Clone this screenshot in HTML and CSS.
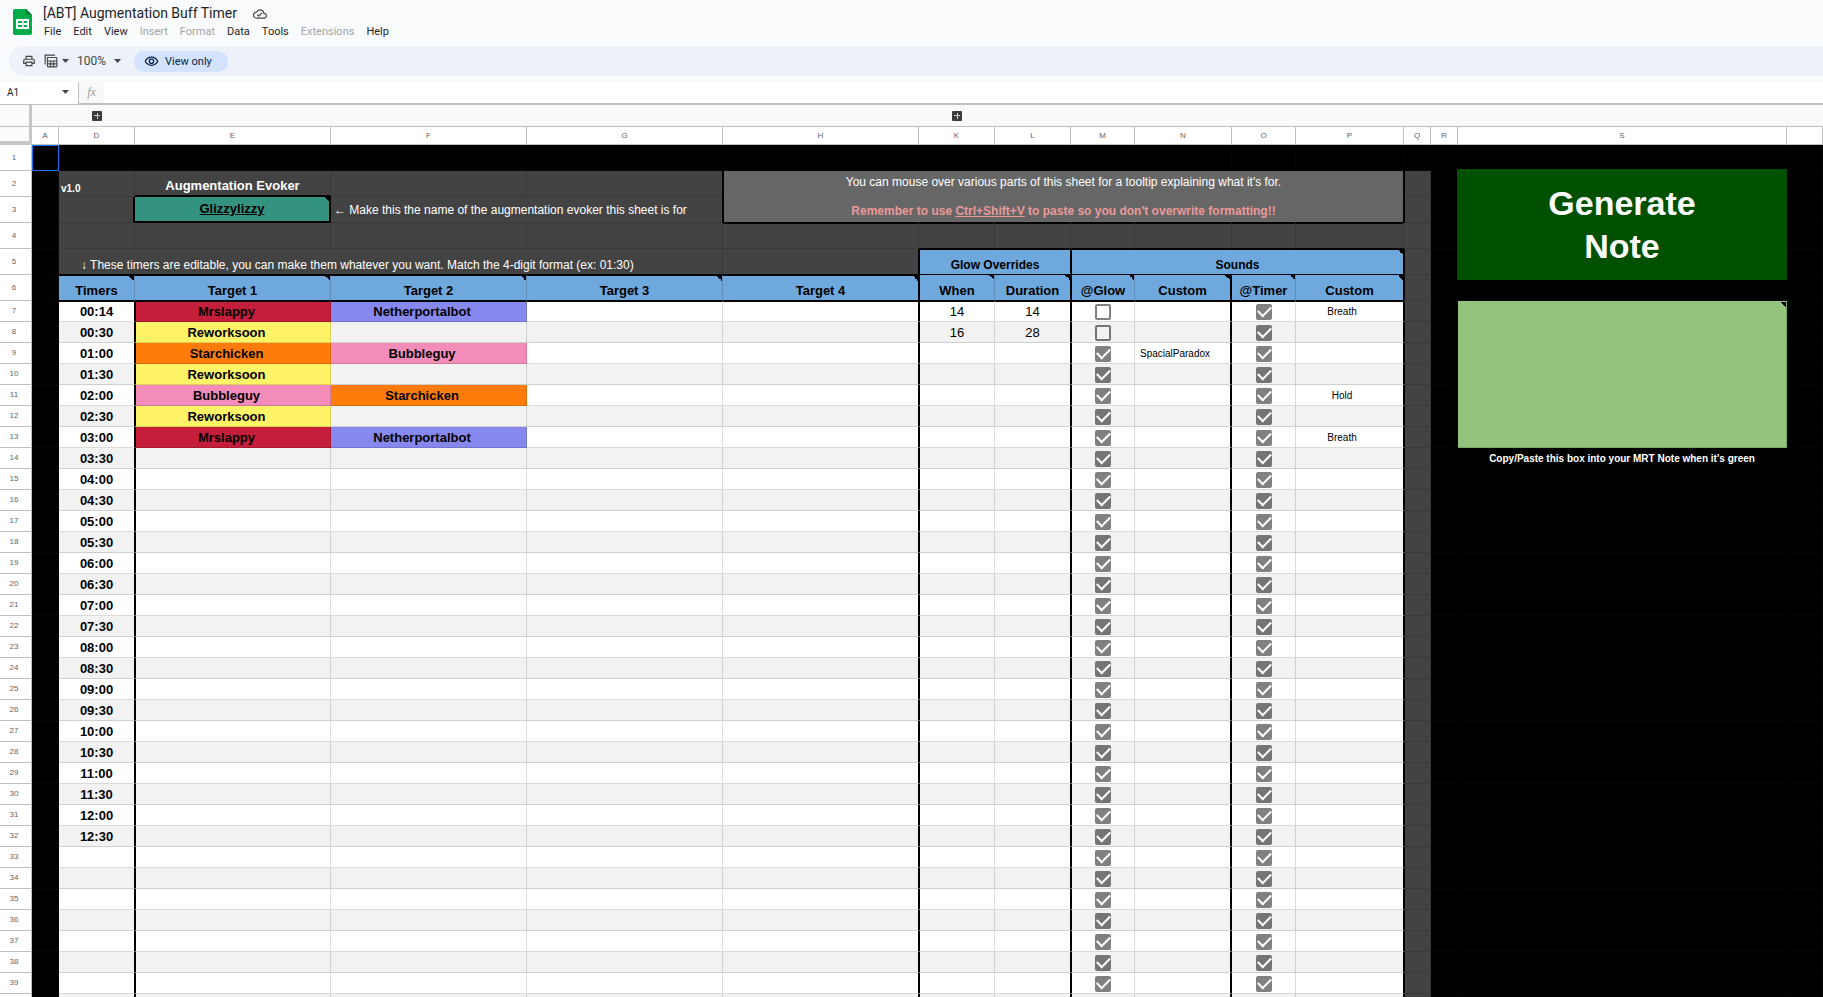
FILE: index.html
```html
<!DOCTYPE html>
<html lang="en">
<head>
<meta charset="utf-8">
<title>[ABT] Augmentation Buff Timer</title>
<link rel="stylesheet" href="styles.css">
</head>
<body>
<header class="topbar">
  <svg class="logo" viewBox="0 0 19 26" aria-hidden="true">
    <path d="M2 0h11l6 6v18a2 2 0 0 1-2 2H2a2 2 0 0 1-2-2V2a2 2 0 0 1 2-2z" fill="#00ac47"/>
    <path d="M13 0l6 6h-4a2 2 0 0 1-2-2z" fill="#00832d"/>
    <path d="M3 10h13v10H3zM5 12v2h4v-2zM10.500 12v2H14v-2zM5 16v2h4v-2zM10.500 16v2H14v-2z" fill="#fff" fill-rule="evenodd"/>
  </svg>
  <div class="heading">
    <div class="title-row">
      <h1 class="title">[ABT] Augmentation Buff Timer</h1>
      <svg class="cloud" viewBox="0 0 24 24" aria-hidden="true"><path fill="#444746" d="M19.350 10.040A7.490 7.490 0 0 0 12 4C9.110 4 6.600 5.640 5.350 8.040A5.994 5.994 0 0 0 0 14c0 3.310 2.690 6 6 6h13c2.760 0 5-2.240 5-5 0-2.640-2.050-4.780-4.650-4.960zM19 18H6c-2.210 0-4-1.790-4-4 0-2.050 1.530-3.760 3.560-3.970l1.070-.11.5-.95A5.469 5.469 0 0 1 12 6c2.620 0 4.880 1.860 5.390 4.430l.3 1.500 1.530.11A2.980 2.980 0 0 1 22 15c0 1.650-1.350 3-3 3zm-9-3.820-2.090-2.090L6.500 13.500 10 17l6.010-6.010-1.410-1.410z"/></svg>
    </div>
    <nav class="menu">
      <button>File</button><button>Edit</button><button>View</button><button disabled>Insert</button><button disabled>Format</button><button>Data</button><button>Tools</button><button disabled>Extensions</button><button>Help</button>
    </nav>
  </div>
</header>

<div class="toolbar" role="toolbar" aria-label="Main">
  <button class="tool" aria-label="Print"><svg viewBox="0 0 24 24"><path fill="#444746" d="M19 8h-1V3H6v5H5c-1.660 0-3 1.340-3 3v6h4v4h12v-4h4v-6c0-1.660-1.340-3-3-3zM8 5h8v3H8V5zm8 14H8v-4h8v4zm2-4v-2H6v2H4v-4c0-.55.45-1 1-1h14c.55 0 1 .45 1 1v4h-2z"/></svg></button>
  <button class="tool drop" aria-label="Filter views"><svg viewBox="0 0 24 24"><path fill="#444746" d="M1 1h18v2H3v15H1zM5 5h16a2 2 0 0 1 2 2v14a2 2 0 0 1-2 2H7a2 2 0 0 1-2-2zM7 7v4h14V7zm0 6v3h3.500v-3zm5.500 0v3h3v-3zm5 0v3H21v-3zM7 18v3h3.500v-3zm5.500 0v3h3v-3zm5 0v3H21v-3z" fill-rule="evenodd"/></svg><i class="caret"></i></button>
  <button class="tool zoom">100%<i class="caret"></i></button>
  <button class="view-only"><svg viewBox="0 0 24 24"><path fill="#041e49" d="M12 4C7 4 2.730 7.110 1 11.500 2.730 15.890 7 19 12 19s9.270-3.110 11-7.500C21.270 7.110 17 4 12 4zm0 13c-3.790 0-7.170-2.130-8.820-5.500C4.830 8.130 8.210 6 12 6s7.170 2.130 8.820 5.500C19.170 14.870 15.790 17 12 17zm0-10a4.500 4.500 0 1 0 0 9 4.500 4.500 0 0 0 0-9zm0 7a2.500 2.500 0 1 1 0-5 2.500 2.500 0 0 1 0 5z"/></svg>View only</button>
</div>

<div class="formula-bar">
  <div class="name-box"><input class="name-input" aria-label="Name box" value="A1"><i class="caret"></i></div>
  <label class="fx" for="formula">fx</label>
  <input class="formula" id="formula">
</div>

<main class="sheet">
<table class="grid">
  <colgroup>
    <col class="w-rows"><col class="w-s"><col class="w-m"><col class="w-l"><col class="w-l"><col class="w-l"><col class="w-l"><col class="w-m"><col class="w-m"><col class="w-check"><col class="w-glow"><col class="w-check"><col class="w-custom"><col class="w-s"><col class="w-s"><col class="w-note"><col>
  </colgroup>
  <thead>
    <tr class="groups">
      <th class="corner"></th><td></td><td><button class="expand" aria-label="Expand columns B to C"></button></td><td colspan="4"></td><td><button class="expand" aria-label="Expand columns I to J"></button></td><td colspan="9"></td>
    </tr>
    <tr class="letters">
      <th class="corner end"></th><th>A</th><th>D</th><th>E</th><th>F</th><th>G</th><th>H</th><th>K</th><th>L</th><th>M</th><th>N</th><th>O</th><th>P</th><th>Q</th><th>R</th><th>S</th><th></th>
    </tr>
  </thead>
  <tbody class="intro">
    <tr>
      <th>1</th><td class="blk selected"></td><td class="blk"></td><td class="blk"></td><td class="blk"></td><td class="blk"></td><td class="blk"></td><td class="blk"></td><td class="blk"></td><td class="blk"></td><td class="blk"></td><td class="blk"></td><td class="blk"></td><td class="blk"></td><td class="blk"></td><td class="blk"></td><td class="blk"></td>
    </tr>
    <tr>
      <th>2</th><td class="blk"></td><td class="drk low version">v1.0</td><td class="drk low strong line-bottom">Augmentation Evoker</td><td class="drk"></td><td class="drk line-end"></td>
      <td class="info" colspan="7" rowspan="2"><p>You can mouse over various parts of this sheet for a tooltip explaining what it's for.</p><p class="warn">Remember to use <u>Ctrl+Shift+V</u> to paste so you don't overwrite formatting!!</p></td>
      <td class="drk edge"></td><td class="blk"></td><td class="blk anchor"><button class="generate">Generate<br>Note</button></td><td class="blk"></td>
    </tr>
    <tr>
      <th>3</th><td class="blk"></td><td class="drk line-right"></td><td class="evoker note">Glizzylizzy</td><td class="drk hint line-end" colspan="2">← Make this the name of the augmentation evoker this sheet is for</td>
      <td class="drk edge"></td><td class="blk"></td><td class="blk"></td><td class="blk"></td>
    </tr>
    <tr>
      <th>4</th><td class="blk"></td><td class="drk"></td><td class="drk"></td><td class="drk"></td><td class="drk"></td><td class="drk under-box"></td><td class="drk under-box over-head"></td><td class="drk under-box over-head"></td><td class="drk under-box over-head"></td><td class="drk under-box over-head"></td><td class="drk under-box over-head"></td><td class="drk under-box over-head"></td><td class="drk"></td><td class="blk"></td><td class="blk"></td><td class="blk"></td>
    </tr>
    <tr>
      <th>5</th><td class="blk"></td><td class="drk low hint timers-hint over-head" colspan="4">↓ These timers are editable, you can make them whatever you want. Match the 4-digit format (ex: 01:30)</td><td class="drk over-head line-end"></td>
      <td class="band low line-end" colspan="2">Glow Overrides</td><td class="band low note line-end" colspan="4">Sounds</td><td class="drk"></td><td class="blk"></td><td class="blk"></td><td class="blk"></td>
    </tr>
    <tr class="heads">
      <th>6</th><td class="blk"></td><td class="head ruled note">Timers</td><td class="head ruled note">Target 1</td><td class="head ruled note">Target 2</td><td class="head ruled note">Target 3</td><td class="head ruled note line-end">Target 4</td><td class="head note">When</td><td class="head note line-end">Duration</td><td class="head note">@Glow</td><td class="head note line-right">Custom</td><td class="head note">@Timer</td><td class="head note line-end">Custom</td><td class="drk"></td><td class="blk"></td><td class="blk"></td><td class="blk"></td>
    </tr>
  </tbody>
  <tbody class="data" id="rows"></tbody>
</table>
</main>
<script src="rows.js"></script>
</body>
</html>
```

FILE: styles.css
```css
* { box-sizing: border-box; }
body {
  margin: 0;
  height: 100vh;
  overflow: hidden;
  display: flex;
  flex-direction: column;
  background: #f9fbfd;
  font-family: Roboto, "Liberation Sans", sans-serif;
  color: #1f1f1f;
}
button, input { font: inherit; color: inherit; border: 0; padding: 0; background: none; }
p, h1 { margin: 0; }

/* Title and menus */
.topbar { display: flex; gap: 11px; padding: 4px 13px 0; height: 46px; flex: none; }
.logo { width: 19px; height: 26px; margin-top: 5px; }
.title-row { display: flex; align-items: center; gap: 16px; height: 18px; }
.title { font-size: 14px; line-height: 18px; font-weight: 400; }
.cloud { width: 14px; height: 14px; margin-top: 2px; }
.menu { display: flex; gap: 12px; padding: 2px 0 0 1px; font-size: 11px; line-height: 15px; }
.menu button:disabled { color: #a3a5a8; }

/* Toolbar */
.toolbar {
  display: flex;
  align-items: center;
  flex: none;
  height: 30px;
  margin: 0 0 6px 9px;
  padding-left: 13px;
  border-radius: 15px 0 0 15px;
  background: #edf2fa;
  font-size: 12px;
  color: #444746;
}
.tool { display: flex; align-items: center; gap: 4px; margin-right: 8px; }
.tool svg { width: 14px; height: 14px; }
.zoom { gap: 8px; margin-right: 13px; }
.caret { width: 7px; height: 4px; background: #444746; clip-path: polygon(0 0, 100% 0, 50% 100%); }
.view-only {
  display: flex;
  align-items: center;
  gap: 6px;
  height: 21px;
  padding: 0 16px 0 10px;
  border-radius: 11px;
  background: #d3e3fd;
  color: #041e49;
  font-size: 11px;
}
.view-only svg { width: 15px; height: 15px; }

/* Formula bar */
.formula-bar { display: flex; flex: none; height: 23px; border-bottom: 1px solid #c0c0c0; background: #fff; }
.name-box { display: flex; align-items: center; width: 78px; padding: 0 9px 2px 7px; font-size: 10px; }
.name-input { flex: 1; min-width: 0; }
.fx {
  width: 26px;
  border-bottom: 1px solid #c0c0c0;
  border-left: 1px solid #c0c0c0;
  background: #f8f8f8;
  color: #a0a0a0;
  font: italic 12px/20px "Liberation Serif", serif;
  text-align: center;
}
.formula { flex: 1; min-width: 0; border-bottom: 1px solid #c0c0c0; font-size: 12px; }

/* Sheet */
.sheet { flex: 1; min-height: 0; overflow: hidden; background: #000; }
.grid {
  width: 100%;
  table-layout: fixed;
  border-spacing: 0;
  font: 13px/16px "Liberation Sans", Arial, sans-serif;
  color: #000;
  text-align: center;
}
.w-rows { width: 32px; }
.w-s { width: 27px; }
.w-m { width: 76px; }
.w-l { width: 196px; }
.w-check { width: 64px; }
.w-glow { width: 97px; }
.w-custom { width: 108px; }
.w-note { width: 329px; }

.grid th, .grid td { padding: 0; white-space: nowrap; vertical-align: middle; }
.grid th {
  border: solid #c0c0c0;
  border-width: 0 1px 1px 0;
  background: #fff;
  color: #5f6368;
  font-size: 8px;
  line-height: 10px;
  font-weight: 400;
}
.grid tbody th { padding-right: 3px; }
.groups td { height: 22px; background: #f9f9f9; border-bottom: 1px solid #c0c0c0; }
.letters th { height: 18px; }
.grid .corner { border-right: 3px solid #c6c6c6; background: #f9fbfd; }
.grid .end { border-bottom: 4px solid #c6c6c6; }
.expand {
  display: block;
  width: 10px;
  height: 10px;
  margin: 0 auto;
  border-radius: 1px;
  background:
    linear-gradient(#ccc, #ccc) center / 6px 1px no-repeat,
    linear-gradient(#ccc, #ccc) center / 1px 6px no-repeat,
    #3c3c3c;
}

.intro td, .data td { border: solid rgba(0, 0, 0, .14); border-width: 0 1px 1px 0; }
.intro td { height: 26px; }
.data td { height: 21px; }
.grid .blk { background: #000; border-color: #060606; }
.drk { background: #434343; color: #fff; }
.grid .selected { outline: 1px solid #1a73e8; outline-offset: -1px; }
.grid .low { vertical-align: bottom; padding-bottom: 1px; }
.strong { font-weight: 700; }
.version { font-size: 10px; line-height: 12px; font-weight: 700; text-align: left; }
.grid .version { padding-left: 2px; }
.hint { font-size: 12px; text-align: left; }
.grid .hint { padding-left: 3px; }
.grid .timers-hint { padding-left: 22px; }
.note {
  background-image: linear-gradient(to bottom left, #000 50%, transparent 50%);
  background-position: top right;
  background-repeat: no-repeat;
  background-size: 5px 5px;
}
.evoker { background-color: #33937f; font-weight: 700; text-decoration: underline; }
.intro .evoker { border-color: #000; border-width: 0 2px 2px 0; }
.intro .line-bottom { border-bottom: 2px solid #000; }
.intro .line-right, .data .line-right { border-right: 2px solid #000; }
.grid .line-end { border-right: 1px solid #000; }
.grid .line-end + td { border-left: 1px solid #000; }
.intro .over-head { border-bottom: 1px solid #000; }
.intro .edge { border-left: 1px solid #000; }
.intro .info {
  background: #666;
  border: solid #000;
  border-width: 0 1px 1px 1px;
  color: #fff;
  font-size: 12px;
  line-height: 22px;
  vertical-align: top;
}
.warn { margin-top: 7px; color: #ea9999; font-weight: 700; }
.under-box { box-shadow: inset 0 1px #000; }
.band { background-color: #6fa8dc; font-size: 12px; font-weight: 700; }
.intro .band { border-top: 1px solid #000; border-right-color: #000; border-bottom-color: #000; }
.head { background-color: #6fa8dc; font-weight: 700; }
.grid .head { border-bottom: 1px solid #000; vertical-align: bottom; padding-bottom: 1px; }
.heads .ruled { border-top: 1px solid #000; }

.anchor { position: relative; }
.generate {
  position: absolute;
  z-index: 1;
  top: -2px;
  left: -1px;
  right: -1px;
  height: 111px;
  background: #005000;
  color: #fff;
  font-size: 34px;
  line-height: 43px;
  font-weight: 700;
}

/* Timer rows */
.data td { background-color: #fff; }
.grid .data td { padding-top: 1px; }
.data .alt td { background-color: #f2f2f2; }
.data .first td { border-top: 1px solid #000; }
.data tr .blk { background-color: #000; border-top-color: #000; }
.data tr .drk { background-color: #434343; border-top-color: #434343; }
.time { font-weight: 700; }
.name { font-weight: 700; }
.data .name { padding-right: 13px; }
.small { font-size: 10px; }
.data .small { padding-right: 15px; }
.data tr .red { background-color: #c41e3a; }
.data tr .purple { background-color: #8788ee; }
.data tr .yellow { background-color: #fff468; }
.data tr .orange { background-color: #ff7c0a; }
.data tr .pink { background-color: #f48cba; }
.data tr .output { background-color: #93c47d; border-top-color: #93c47d; }
.caption { color: #fff; font-size: 10px; font-weight: 700; }

.check {
  appearance: none;
  display: grid;
  place-items: center;
  width: 16px;
  height: 16px;
  margin: 0 auto;
  border: 2px solid #808080;
  border-radius: 2px;
}
.alt .check { border-color: #757575; }
.check:checked { background: #808080; }
.alt .check:checked { background: #757575; }
.check:checked::before {
  content: "";
  width: 11px;
  height: 6px;
  border: solid #fff;
  border-width: 0 0 2px 2px;
  transform: translateY(-2px) rotate(-45deg);
}
```

FILE: rows.js
```js
const names = {
  Mrslappy: "red",
  Netherportalbot: "purple",
  Reworksoon: "yellow",
  Starchicken: "orange",
  Bubbleguy: "pink"
};

const plan = {
  7: { targets: ["Mrslappy", "Netherportalbot"], when: 14, duration: 14, glow: false, timerSound: "Breath" },
  8: { targets: ["Reworksoon"], when: 16, duration: 28, glow: false },
  9: { targets: ["Starchicken", "Bubbleguy"], glowSound: "SpacialParadox" },
  10: { targets: ["Reworksoon"] },
  11: { targets: ["Bubbleguy", "Starchicken"], timerSound: "Hold" },
  12: { targets: ["Reworksoon"] },
  13: { targets: ["Mrslappy", "Netherportalbot"], timerSound: "Breath" }
};

const lastRow = 40;

function timeFor(row) {
  if (row === 7) return "00:14";
  if (row > 32) return "";
  const seconds = (row - 7) * 30;
  const pad = (n) => String(n).padStart(2, "0");
  return pad(Math.floor(seconds / 60)) + ":" + pad(seconds % 60);
}

const cell = (cls, text = "") => `<td class="${cls}">${text}</td>`;
const check = (row, label, on) =>
  `<td><input class="check" type="checkbox" aria-label="${label} row ${row}"${on ? " checked" : ""}></td>`;

let html = "";
for (let row = 7; row <= lastRow; row++) {
  const p = plan[row] || {};
  const targets = p.targets || [];
  const rowClass = row === 7 ? "first" : row % 2 === 0 ? "alt" : "";
  html += `<tr class="${rowClass}"><th>${row < lastRow ? row : ""}</th>` + cell("blk") + cell("time line-end", timeFor(row));
  for (let i = 0; i < 4; i++) {
    const name = targets[i];
    html += cell((name ? "name " + names[name] : "") + (i === 3 ? " line-end" : ""), name);
  }
  html += cell("", p.when) + cell("line-end", p.duration);
  html += check(row, "Glow sound", p.glow !== false) + cell("small line-right", p.glowSound);
  html += check(row, "Timer sound", true) + cell("small line-end", p.timerSound);
  html += cell("drk") + cell("blk");
  if (row === 7) html += '<td class="output note" rowspan="7"></td>';
  if (row === 14) html += cell("blk caption", "Copy/Paste this box into your MRT Note when it's green");
  if (row > 14) html += cell("blk");
  html += cell("blk") + "</tr>";
}
document.getElementById("rows").innerHTML = html;
```
